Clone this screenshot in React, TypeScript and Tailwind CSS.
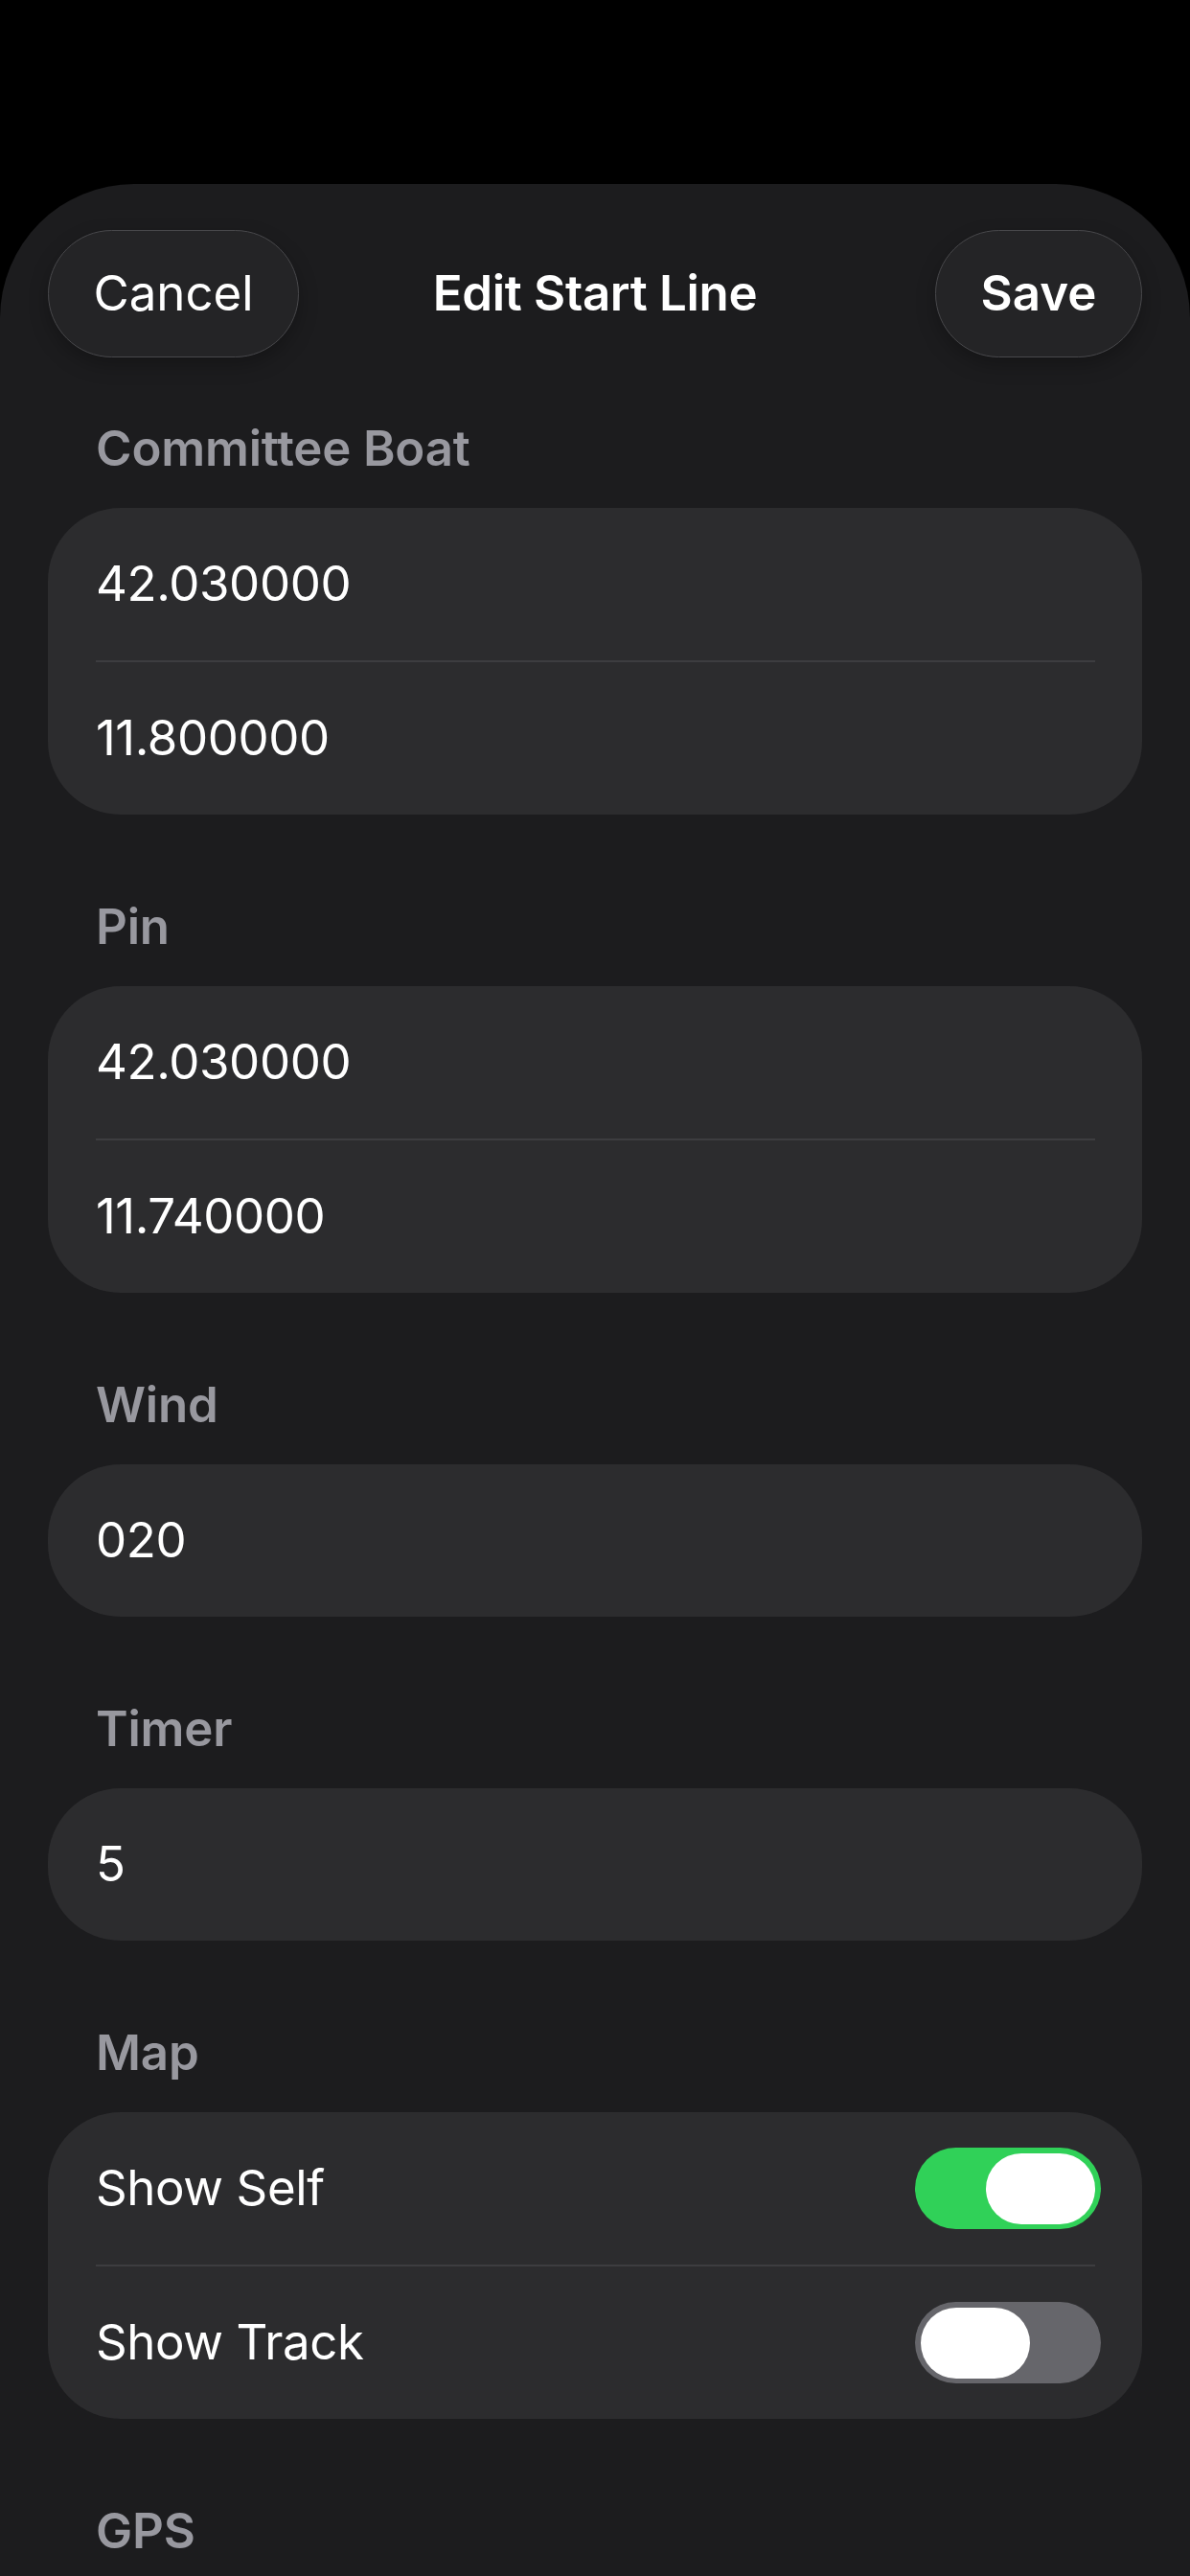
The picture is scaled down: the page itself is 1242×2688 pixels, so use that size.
import type { ReactNode } from "react";

const font = { fontFamily: "Inter, 'Noto Sans', 'Liberation Sans', sans-serif" };

interface SectionProps {
  title: string;
  children: ReactNode;
  first?: boolean;
}

function Section({ title, children, first }: SectionProps) {
  return (
    <div className={first ? "mt-[65px]" : "mt-[87px]"}>
      <div className="h-[60px] pl-[50px] flex items-center text-[51px] font-semibold text-[#98989f] tracking-[-0.2px]">
        {title}
      </div>
      {children && <div className="mt-[32px]">{children}</div>}
    </div>
  );
}

function Card({ children }: { children: ReactNode }) {
  return (
    <div className="bg-[#2c2c2e] rounded-[76px] overflow-hidden">
      {children}
    </div>
  );
}

function Divider() {
  return <div className="ml-[50px] mr-[49px] h-[2px] bg-[#3d3d40]" />;
}

function FieldRow({ value }: { value: string }) {
  return (
    <div className="h-[159px] pl-[50px] flex items-center text-[51px] text-white tracking-[-0.4px]">
      {value}
    </div>
  );
}

function Toggle({ on }: { on: boolean }) {
  return (
    <div
      className={
        "w-[194px] h-[85px] rounded-full flex items-center px-[6px] " +
        (on ? "bg-[#30d158] justify-end" : "bg-[#66666b] justify-start")
      }
    >
      <div className="w-[114px] h-[74px] rounded-full bg-white" />
    </div>
  );
}

function ToggleRow({ label, on }: { label: string; on: boolean }) {
  return (
    <div className="h-[159px] pl-[50px] pr-[43px] flex items-center justify-between text-[51px] text-white tracking-[-0.4px]">
      <span>{label}</span>
      <Toggle on={on} />
    </div>
  );
}

export default function App() {
  return (
    <div className="w-[1242px] h-[2688px] bg-black pt-[192px] overflow-hidden" style={font}>
      <div className="h-full bg-[#1c1c1e] rounded-t-[140px] px-[50px] pt-[48px]">
        {/* nav bar */}
        <div className="grid grid-cols-[1fr_auto_1fr] items-center h-[133px]">
          <button className="justify-self-start h-[133px] w-[262px] rounded-full bg-[#242426] border-[1.5px] border-[#48484b] text-white text-[51px] shadow-[0_8px_20px_rgba(0,0,0,0.25)]">
            Cancel
          </button>
          <div className="text-white text-[51px] font-semibold tracking-[-0.3px]">Edit Start Line</div>
          <button className="justify-self-end h-[133px] w-[216px] rounded-full bg-[#242426] border-[1.5px] border-[#48484b] text-white text-[51px] font-semibold shadow-[0_8px_20px_rgba(0,0,0,0.25)]">
            Save
          </button>
        </div>

        <Section title="Committee Boat" first>
          <Card>
            <FieldRow value="42.030000" />
            <Divider />
            <FieldRow value="11.800000" />
          </Card>
        </Section>

        <Section title="Pin">
          <Card>
            <FieldRow value="42.030000" />
            <Divider />
            <FieldRow value="11.740000" />
          </Card>
        </Section>

        <Section title="Wind">
          <Card>
            <FieldRow value="020" />
          </Card>
        </Section>

        <Section title="Timer">
          <Card>
            <FieldRow value="5" />
          </Card>
        </Section>

        <Section title="Map">
          <Card>
            <ToggleRow label="Show Self" on />
            <Divider />
            <ToggleRow label="Show Track" on={false} />
          </Card>
        </Section>

        <Section title="GPS">{null}</Section>
      </div>
    </div>
  );
}
